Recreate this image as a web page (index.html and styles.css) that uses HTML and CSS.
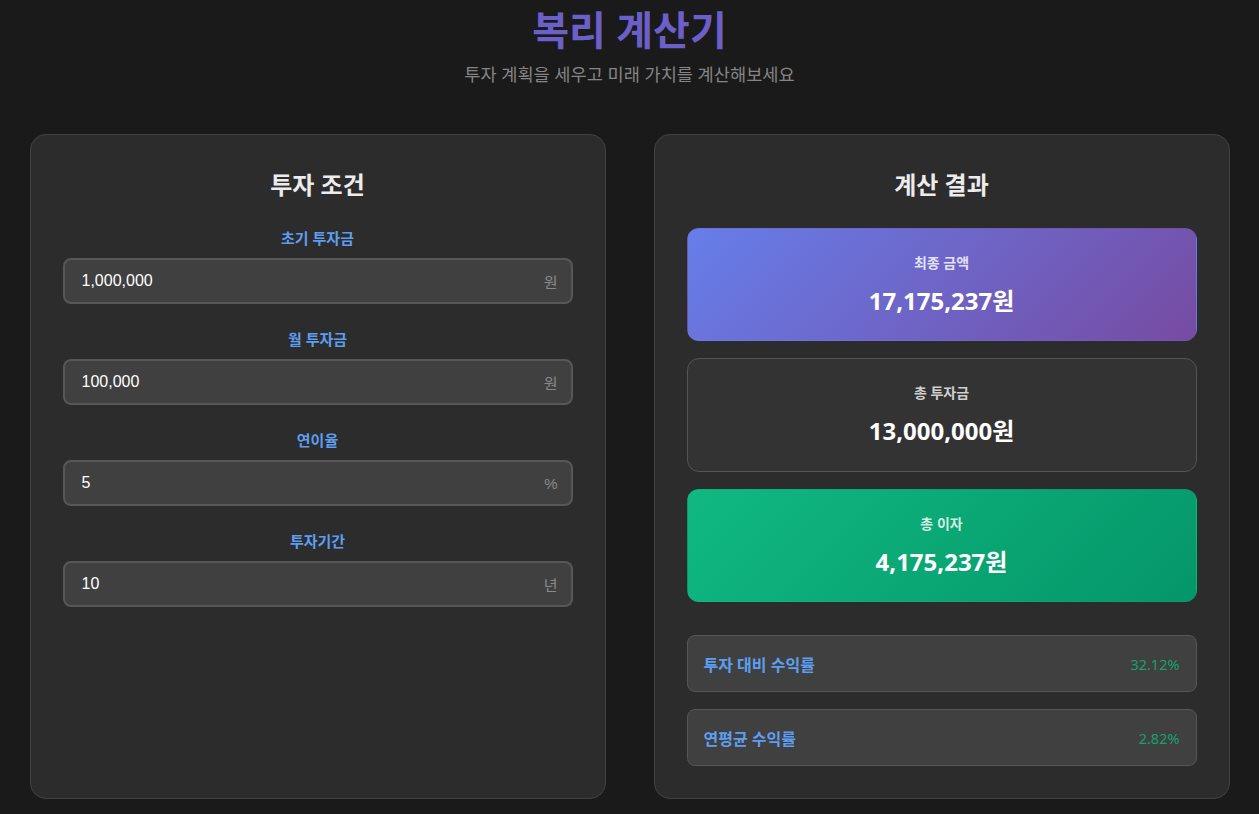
FILE: index.html
```html
<!DOCTYPE html>
<html lang="ko">
<head>
<meta charset="utf-8">
<title>복리 계산기</title>
<link rel="stylesheet" href="styles.css">
</head>
<body>
<header class="header">
  <h1 class="title">복리 계산기</h1>
  <p class="subtitle">투자 계획을 세우고 미래 가치를 계산해보세요</p>
</header>
<main class="grid">
  <section class="card">
    <h2 class="card-title">투자 조건</h2>
    <div class="fields">
      <div class="field">
        <label class="label">초기 투자금</label>
        <div class="input-wrap">
          <input class="input" type="text" value="1,000,000">
          <span class="unit">원</span>
        </div>
      </div>
      <div class="field">
        <label class="label">월 투자금</label>
        <div class="input-wrap">
          <input class="input" type="text" value="100,000">
          <span class="unit">원</span>
        </div>
      </div>
      <div class="field">
        <label class="label">연이율</label>
        <div class="input-wrap">
          <input class="input" type="text" value="5">
          <span class="unit">%</span>
        </div>
      </div>
      <div class="field">
        <label class="label">투자기간</label>
        <div class="input-wrap">
          <input class="input" type="text" value="10">
          <span class="unit">년</span>
        </div>
      </div>
    </div>
  </section>
  <section class="card">
    <h2 class="card-title">계산 결과</h2>
    <div class="results">
      <div class="result result-final">
        <div class="result-label">최종 금액</div>
        <div class="result-value">17,175,237원</div>
      </div>
      <div class="result result-total">
        <div class="result-label">총 투자금</div>
        <div class="result-value">13,000,000원</div>
      </div>
      <div class="result result-interest">
        <div class="result-label">총 이자</div>
        <div class="result-value">4,175,237원</div>
      </div>
    </div>
    <div class="stats">
      <div class="stat">
        <span class="stat-label">투자 대비 수익률</span>
        <span class="stat-value">32.12%</span>
      </div>
      <div class="stat">
        <span class="stat-label">연평균 수익률</span>
        <span class="stat-value">2.82%</span>
      </div>
    </div>
  </section>
</main>
</body>
</html>
```

FILE: styles.css
```css
* { box-sizing: border-box; }

body {
  margin: 0;
  background: #1a1a1a;
  font-family: "Noto Sans", "Noto Sans CJK KR", sans-serif;
  color: #e8e8e8;
}

.header {
  text-align: center;
  padding-top: 6px;
}

.title {
  margin: 0;
  font-size: 40px;
  line-height: 48px;
  font-weight: 700;
  color: #6c5fc9;
}

.subtitle {
  margin: 8px 0 0;
  font-size: 17.6px;
  line-height: 24px;
  color: #858585;
}

.grid {
  max-width: 1200px;
  margin: 48px auto 0;
  display: grid;
  grid-template-columns: 1fr 1fr;
  gap: 48px;
}

.card {
  background: #2c2c2c;
  border: 1px solid #424242;
  border-radius: 16px;
  padding: 32px;
}

.card-title {
  margin: 0 0 25px;
  text-align: center;
  font-size: 24px;
  line-height: 36px;
  font-weight: 700;
  color: #ececec;
}

.fields {
  display: flex;
  flex-direction: column;
  gap: 25px;
}

.field {
  display: flex;
  flex-direction: column;
}

.label {
  text-align: center;
  font-size: 15px;
  line-height: 20px;
  font-weight: 700;
  color: #5e9ef0;
  margin-bottom: 10px;
}

.input-wrap {
  position: relative;
}

.input {
  display: block;
  width: 100%;
  height: 46px;
  padding: 0 40px 0 17px;
  background: #404040;
  border: 2px solid #575757;
  border-radius: 8px;
  color: #ffffff;
  font-family: "Liberation Sans", Arial, sans-serif;
  font-size: 16px;
  outline: none;
}

.unit {
  position: absolute;
  right: 15px;
  top: 50%;
  transform: translateY(-50%);
  font-family: "Liberation Sans", "Noto Sans CJK KR", sans-serif;
  font-size: 15px;
  color: #8a8a8a;
}

.results {
  display: flex;
  flex-direction: column;
  gap: 17px;
}

.result {
  border: 1px solid transparent;
  border-radius: 12px;
  padding: 24px 20px 23px;
  text-align: center;
}

.result-final {
  background: linear-gradient(135deg, #667eea 0%, #764ba2 100%);
}

.result-total {
  background: #333333;
  border-color: #555555;
  padding-bottom: 24px;
}

.result-interest {
  background: linear-gradient(135deg, #10b981 0%, #059669 100%);
}

.result-label {
  font-size: 14px;
  line-height: 20px;
  font-weight: 700;
  color: rgba(255, 255, 255, 0.82);
}

.result-total .result-label {
  color: #cfcfcf;
}

.result-value {
  margin-top: 12px;
  font-size: 24px;
  line-height: 32px;
  font-weight: 700;
  color: #ffffff;
}

.stats {
  margin-top: 33px;
  display: flex;
  flex-direction: column;
  gap: 17px;
}

.stat {
  display: flex;
  justify-content: space-between;
  align-items: center;
  background: #404040;
  border: 1px solid #565656;
  border-radius: 8px;
  padding: 16px;
  height: 57px;
}

.stat-label {
  font-size: 16px;
  font-weight: 700;
  color: #5e9ef0;
}

.stat-value {
  font-size: 14.5px;
  color: #14a06f;
}
```
